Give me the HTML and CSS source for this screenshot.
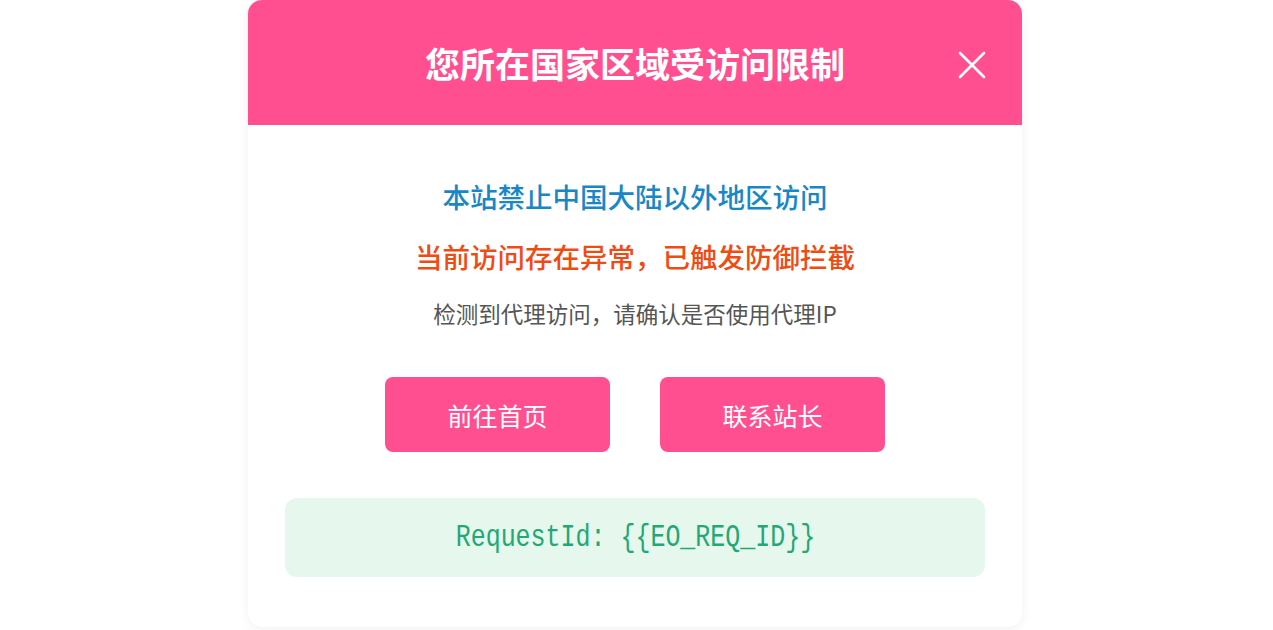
FILE: index.html
```html
<!DOCTYPE html>
<html lang="zh-CN">
<head>
<meta charset="utf-8">
<title>访问受限</title>
<link rel="stylesheet" href="styles.css">
</head>
<body>
<div class="card">
  <div class="header">
    <h1 class="title">您所在国家区域受访问限制</h1>
    <button class="close" aria-label="关闭">
      <svg width="28" height="28" viewBox="0 0 28 28"><path d="M2 2 L26 26 M26 2 L2 26" stroke="#fff" stroke-width="2.6" stroke-linecap="round" fill="none"/></svg>
    </button>
  </div>
  <div class="content">
    <p class="msg msg-blue">本站禁止中国大陆以外地区访问</p>
    <p class="msg msg-red">当前访问存在异常，已触发防御拦截</p>
    <p class="msg-gray">检测到代理访问，请确认是否使用代理IP</p>
    <div class="actions">
      <a class="btn" href="#">前往首页</a>
      <a class="btn" href="#">联系站长</a>
    </div>
    <div class="reqbox"><span class="reqtext">RequestId: {{EO_REQ_ID}}</span></div>
  </div>
</div>
</body>
</html>
```
FILE: styles.css
```css
* { box-sizing: border-box; }
html, body { margin: 0; padding: 0; background: #fff; }
body {
  font-family: "Noto Sans CJK SC", "Noto Sans", sans-serif;
  height: 630px;
  overflow: hidden;
}
.card {
  width: 774px;
  margin-left: 248px;
  background: #fff;
  border-radius: 14px;
  box-shadow: 0 2px 12px rgba(0,0,0,0.06);
  overflow: hidden;
}
.header {
  position: relative;
  height: 125px;
  background: #ff4f91;
  display: flex;
  align-items: center;
  justify-content: center;
}
.title {
  margin: 0;
  color: #fff;
  font-size: 35px;
  font-weight: 700;
  line-height: 1;
}
.close {
  position: absolute;
  right: 36px;
  top: 51px;
  width: 28px;
  height: 28px;
  padding: 0;
  border: 0;
  background: transparent;
  display: flex;
}
.content {
  padding: 51px 37px 50px;
  display: flex;
  flex-direction: column;
  align-items: stretch;
}
.msg {
  margin: 0;
  text-align: center;
  font-size: 27.5px;
  line-height: 40px;
  font-weight: 500;
}
.msg-blue { color: #1787c7; }
.msg-red { color: #f04b12; margin-top: 20px; }
.msg-gray {
  margin: 21px 0 0;
  text-align: center;
  color: #555;
  font-size: 22.5px;
  line-height: 32px;
}
.actions {
  margin-top: 48px;
  display: flex;
  justify-content: center;
  gap: 50px;
}
.btn {
  width: 225px;
  height: 75px;
  border-radius: 8px;
  background: #ff4f91;
  color: #fff;
  font-size: 25px;
  text-decoration: none;
  display: flex;
  align-items: center;
  justify-content: center;
}
.reqbox {
  margin-top: 46px;
  height: 79px;
  border-radius: 12px;
  background: #e6f7ee;
  color: #22a874;
  display: flex;
  align-items: center;
  justify-content: center;
}
.reqtext {
  display: inline-block;
  font-family: "Liberation Mono", monospace;
  font-size: 32px;
  line-height: 1;
  white-space: pre;
  transform: scaleX(0.78);
}
```
